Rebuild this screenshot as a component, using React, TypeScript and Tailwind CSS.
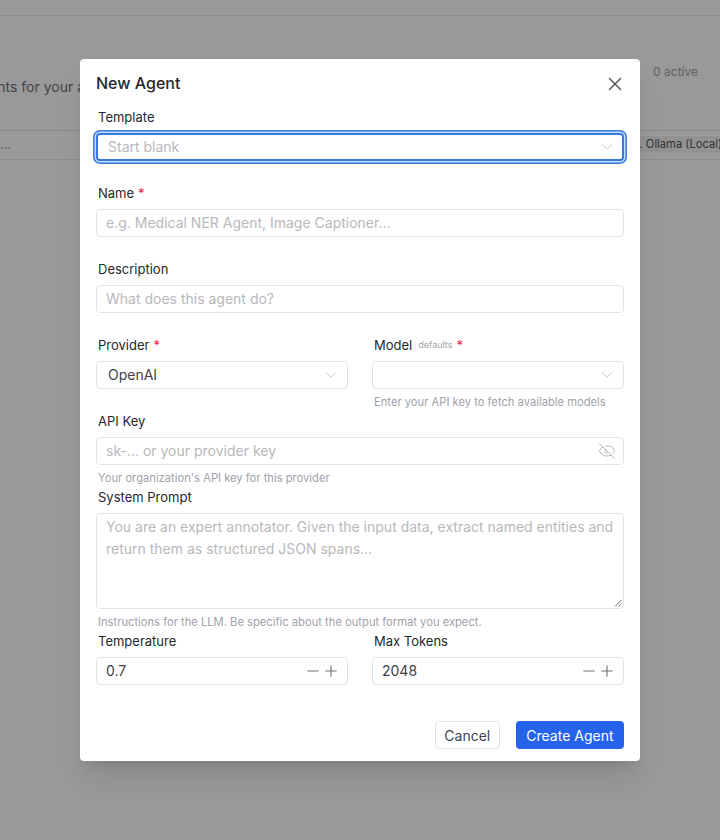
import { ChevronDown, EyeOff, Minus, Plus, X } from 'lucide-react'
import type { ReactNode } from 'react'

function Label({ children, required }: { children: ReactNode; required?: boolean }) {
  return (
    <div className="flex h-4 items-center px-0.5 text-[13px] font-normal leading-4 text-[#27272a]">
      <span>{children}</span>
      {required ? <span className="ml-1 text-[#e11d48]">*</span> : null}
    </div>
  )
}

function Hint({ children }: { children: ReactNode }) {
  return <p className="mt-[5px] h-4 whitespace-nowrap px-0.5 text-[11.2px] leading-4 text-[#a1a1aa]">{children}</p>
}

function TextField({ placeholder, children }: { placeholder: string; children?: ReactNode }) {
  return (
    <div className="mt-2 flex h-7 items-center rounded border border-[#e4e4e7] bg-white pl-[9px] pr-[7px]">
      <span className="flex-1 truncate text-[14px] leading-5 text-[#b8b8bd]">{placeholder}</span>
      {children}
    </div>
  )
}

function SelectField({ value }: { value?: string }) {
  return (
    <div className="mt-2 flex h-7 items-center rounded border border-[#e4e4e7] bg-white pl-[11px] pr-[7px]">
      <span className="flex-1 text-[14px] leading-5 text-[#3f3f46]">{value}</span>
      <ChevronDown className="size-[18px] text-[#c0c0c4]" strokeWidth={1.25} />
    </div>
  )
}

function NumberField({ value }: { value: string }) {
  return (
    <div className="mt-2 flex h-7 items-center rounded border border-[#e4e4e7] bg-white pl-[9px] pr-[7px]">
      <span className="flex-1 text-[14px] leading-5 text-[#3f3f46]">{value}</span>
      <div className="flex text-[#71717a]">
        <Minus className="size-[18px]" strokeWidth={1.5} />
        <Plus className="size-[18px]" strokeWidth={1.5} />
      </div>
    </div>
  )
}

function ResizeGrip() {
  return (
    <svg className="absolute bottom-px right-px size-2 text-[#52525b]" viewBox="0 0 8 8" fill="none" stroke="currentColor" strokeWidth="0.8">
      <path d="M1 7.5 7.5 1M4.5 7.5 7.5 4.5" />
    </svg>
  )
}

function PageBehind() {
  return (
    <div className="h-[840px] overflow-hidden bg-white font-['Inter',sans-serif]">
      <div className="h-4 border-b border-[#e4e4e7]" />
      <div className="flex h-[114px] items-start justify-between">
        <p className="-ml-[102px] mt-[61px] whitespace-nowrap text-[14px] leading-[20px] text-[#71717a]">
          Manage AI agents for your annotation projects
        </p>
        <p className="mr-[22px] mt-[46px] text-[12px] leading-[20px] text-[#a1a1aa]">0 active</p>
      </div>
      <div className="flex h-[30px] items-center justify-between border-y border-[#e4e4e7]">
        <span className="text-[13px] text-[#a1a1aa]">...</span>
        <span className="-mr-[6px] mb-0.5 whitespace-nowrap rounded bg-[#f4f4f5] px-1 text-[11.2px] text-[#52525b]">
          . Ollama (Local)
        </span>
      </div>
    </div>
  )
}

export default function App() {
  return (
    <div className="relative h-[840px] w-[720px] overflow-hidden font-['Inter',sans-serif]">
      <PageBehind />
      <div className="absolute inset-0 flex items-start justify-center bg-black/40 pt-[59px]">
        <div className="h-[702px] w-[560px] rounded bg-white p-4 shadow-xl">
          <div className="flex h-[18px] items-center justify-between">
            <h2 className="-mt-0.5 text-[16px] font-medium leading-[18px] text-[#27272a]">New Agent</h2>
            <X className="-mr-0.5 size-[22px] text-[#52525b]" strokeWidth={1.5} />
          </div>

          <div className="mt-4">
            <Label>Template</Label>
          </div>
          <div className="mt-2 flex h-7 items-center rounded border-2 border-[#3b78d8] bg-white pl-2.5 pr-1.5 shadow-[0_0_0_1.5px_#bfdbfe,0_0_0_3px_#3b78d8]">
            <span className="flex-1 text-[14px] leading-5 text-[#b8b8bd]">Start blank</span>
            <ChevronDown className="size-[18px] text-[#c0c0c4]" strokeWidth={1.25} />
          </div>

          <div className="mt-6">
            <Label required>Name</Label>
            <TextField placeholder="e.g. Medical NER Agent, Image Captioner..." />
          </div>

          <div className="mt-6">
            <Label>Description</Label>
            <TextField placeholder="What does this agent do?" />
          </div>

          <div className="mt-6 grid grid-cols-2 gap-x-6">
            <div>
              <Label required>Provider</Label>
              <SelectField value="OpenAI" />
            </div>
            <div>
              <div className="flex h-4 items-center px-0.5 text-[13px] leading-4 text-[#27272a]">
                <span>Model</span>
                <span className="ml-1.5 text-[9px] text-[#a1a1aa]">defaults</span>
                <span className="ml-1 text-[#e11d48]">*</span>
              </div>
              <SelectField />
              <Hint>Enter your API key to fetch available models</Hint>
            </div>
          </div>

          <div className="mt-[3px]">
            <Label>API Key</Label>
            <TextField placeholder="sk-... or your provider key">
              <EyeOff className="size-[18px] text-[#b0b0b6]" strokeWidth={1.25} />
            </TextField>
            <Hint>Your organization's API key for this provider</Hint>
          </div>

          <div className="mt-[3px]">
            <Label>System Prompt</Label>
            <div className="relative mt-2 h-24 rounded border border-[#e4e4e7] bg-white px-[9px] py-0.5 text-[14px] leading-[22px] text-[#b8b8bd]">
              You are an expert annotator. Given the input data, extract named entities and return them as structured JSON spans...
              <ResizeGrip />
            </div>
            <Hint>Instructions for the LLM. Be specific about the output format you expect.</Hint>
          </div>

          <div className="mt-[3px] grid grid-cols-2 gap-x-6">
            <div>
              <Label>Temperature</Label>
              <NumberField value="0.7" />
            </div>
            <div>
              <Label>Max Tokens</Label>
              <NumberField value="2048" />
            </div>
          </div>

          <div className="mt-9 flex justify-end gap-4">
            <button type="button" className="h-7 rounded border border-[#e4e4e7] bg-white px-[8.5px] text-[14px] text-[#3f3f46]">
              Cancel
            </button>
            <button type="button" className="h-7 rounded bg-[#2563eb] px-[10.5px] text-[14px] text-white">
              Create Agent
            </button>
          </div>
        </div>
      </div>
    </div>
  )
}
